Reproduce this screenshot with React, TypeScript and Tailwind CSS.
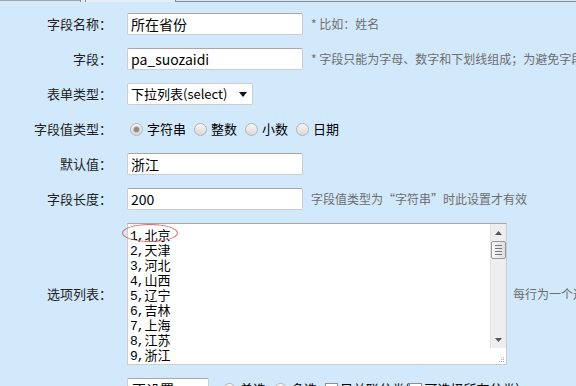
import React from 'react';

// Form for editing a custom field (字段设置)
const cjk = "font-['Noto_Sans_CJK_SC','Microsoft_YaHei',sans-serif]";
const hint = "font-['Noto_Sans_CJK_SC',sans-serif] text-[12px] text-[#6e6e6e]";

const provinces = ['北京', '天津', '河北', '山西', '辽宁', '吉林', '上海', '江苏', '浙江', '安徽'];

const Radio = ({ checked = false }: { checked?: boolean }) => (
  <span className="flex h-[13px] w-[13px] shrink-0 items-center justify-center rounded-full border border-[#b4b4b4] bg-gradient-to-b from-[#f7f7f7] to-[#d8d8d8]">
    {checked && <span className="h-[5px] w-[5px] rounded-full bg-[#8a8a8a] ring-1 ring-[#c4c4c4]" />}
  </span>
);

const Checkbox = () => (
  <span className="flex h-[13px] w-[13px] shrink-0 items-center justify-center border border-[#8e8e8e] bg-white">
    <span className="h-[7px] w-[7px] bg-gradient-to-br from-[#d8dfe8] to-[#9fb0c4]" />
  </span>
);

const Arrow = () => (
  <svg width="8" height="5" viewBox="0 0 8 5">
    <path d="M0 0h8L4 5z" fill="#111" />
  </svg>
);

const Label = ({ children }: { children: React.ReactNode }) => (
  <div className={`w-[112px] shrink-0 text-right text-[13px] text-[#222] ${cjk}`}>{children}</div>
);

const TextInput = ({ value }: { value: string }) => (
  <div className={`ml-[15px] flex h-[22px] w-[176px] shrink-0 items-center rounded-[2px] border border-[#cdcdcd] border-t-[#a8a8a8] bg-white px-[3px] text-[14px] text-black ${cjk}`}>
    {value}
  </div>
);

const Row = ({ children, className = '' }: { children: React.ReactNode; className?: string }) => (
  <div className={`flex items-center overflow-hidden ${className}`}>{children}</div>
);

export default function App() {
  return (
    <div className="h-[386px] w-[576px] overflow-hidden bg-[#d2e8fb]">
      {/* tab strip edge */}
      <div className="flex h-[2px]">
        <div className="w-[80px] border-t border-[#a4a4a4]" />
        <div className="w-[1px] bg-[#8c8c8c]" />
        <div className="w-[4px] bg-[#e4eef8]" />
        <div className="w-[1px] bg-[#8c8c8c]" />
        <div className="w-[89px] bg-[#e4eef8]" />
        <div className="w-[1px] bg-[#8c8c8c]" />
        <div className="flex-1 border-b border-[#8c8c8c]" />
      </div>

      <div className="flex flex-col gap-[13px] pt-[11px]">
        <Row>
          <Label>字段名称：</Label>
          <TextInput value="所在省份" />
          <span className={`ml-[8px] whitespace-nowrap ${hint}`}>* 比如：姓名</span>
        </Row>

        <Row>
          <Label>字段：</Label>
          <TextInput value="pa_suozaidi" />
          <span className={`ml-[8px] whitespace-nowrap ${hint}`}>* 字段只能为字母、数字和下划线组成；为避免字段名重复</span>
        </Row>

        <Row>
          <Label>表单类型：</Label>
          <div className={`ml-[15px] flex h-[22px] w-[126px] shrink-0 items-center justify-between rounded-[2px] border border-[#cdcdcd] bg-white pl-[3px] pr-[5px] text-[13px] text-black ${cjk}`}>
            <span>下拉列表(select)</span>
            <Arrow />
          </div>
        </Row>

        <Row className="h-[22px]">
          <Label>字段值类型：</Label>
          <div className={`ml-[18px] flex items-center text-[13px] text-black ${cjk}`}>
            <Radio checked />
            <span className="ml-[4px] mr-[8px]">字符串</span>
            <Radio />
            <span className="ml-[4px] mr-[8px]">整数</span>
            <Radio />
            <span className="ml-[4px] mr-[8px]">小数</span>
            <Radio />
            <span className="ml-[4px]">日期</span>
          </div>
        </Row>

        <Row>
          <Label>默认值：</Label>
          <TextInput value="浙江" />
        </Row>

        <Row>
          <Label>字段长度：</Label>
          <TextInput value="200" />
          <span className={`ml-[8px] whitespace-nowrap ${hint}`}>字段值类型为“字符串”时此设置才有效</span>
        </Row>

        <Row className="overflow-visible">
          <Label>选项列表：</Label>
          <div className="relative ml-[15px] flex h-[142px] w-[380px] shrink-0 border border-[#cdcdcd] border-t-[#a8a8a8] bg-white">
            <div className="flex-1 overflow-hidden pl-[2px] pt-[3px] text-[13px] leading-[15px]">
              {provinces.map((p, i) => (
                <div key={i} className="h-[15px] whitespace-nowrap text-black">
                  <span className="font-['Liberation_Mono',monospace] tracking-[-1.1px]">{`${i + 1},`}</span>
                  <span className="ml-[1px] font-['Noto_Sans_CJK_SC',sans-serif]">{p}</span>
                </div>
              ))}
            </div>
            {/* scrollbar */}
            <div className="flex w-[16px] flex-col">
              <div className="flex flex-1 flex-col items-center border-l border-[#e2e2e2] bg-[#eeeeee]">
                <div className="flex h-[17px] items-center">
                  <svg width="7" height="4" viewBox="0 0 7 4"><path d="M0 4h7L3.5 0z" fill="#555" /></svg>
                </div>
                <div className="flex h-[18px] w-[15px] flex-col items-center justify-center gap-[2px] rounded-[2px] border border-[#999] bg-gradient-to-r from-[#f8f8f8] to-[#dedede]">
                  <span className="h-[1px] w-[7px] bg-[#777]" />
                  <span className="h-[1px] w-[7px] bg-[#777]" />
                  <span className="h-[1px] w-[7px] bg-[#777]" />
                  <span className="h-[1px] w-[7px] bg-[#777]" />
                </div>
                <div className="flex-1" />
                <div className="flex h-[17px] items-center">
                  <svg width="7" height="4" viewBox="0 0 7 4"><path d="M0 0h7L3.5 4z" fill="#555" /></svg>
                </div>
              </div>
              <div className="flex h-[16px] items-end justify-end bg-white pb-[1px] pr-[1px]">
                <svg width="7" height="7" viewBox="0 0 7 7">
                  <rect x="5" y="1" width="1" height="1" fill="#aaa" />
                  <rect x="3" y="3" width="1" height="1" fill="#aaa" />
                  <rect x="5" y="3" width="1" height="1" fill="#aaa" />
                  <rect x="1" y="5" width="1" height="1" fill="#aaa" />
                  <rect x="3" y="5" width="1" height="1" fill="#aaa" />
                  <rect x="5" y="5" width="1" height="1" fill="#aaa" />
                </svg>
              </div>
            </div>
            {/* highlight ring around first entry */}
            <div className="absolute left-[-6px] top-[0px] h-[18px] w-[56px] rounded-[50%] border border-[#e06464]" />
          </div>
          <span className={`ml-[6px] whitespace-nowrap ${hint}`}>每行为一个选项</span>
        </Row>

        <Row className="overflow-visible">
          <div className="w-[112px] shrink-0" />
          <div className={`ml-[15px] flex h-[22px] w-[82px] shrink-0 items-center rounded-[2px] border border-[#cdcdcd] border-t-[#a8a8a8] bg-white px-[4px] text-[14px] ${cjk}`}>
            不设置
          </div>
          <div className={`ml-[14px] flex shrink-0 items-center whitespace-nowrap text-[13px] text-black ${cjk}`}>
            <Radio />
            <span className="ml-[4px] mr-[8px]">单选</span>
            <Radio />
            <span className="ml-[4px] mr-[8px]">多选</span>
            <Checkbox />
            <span className="ml-[2px]">只关联分类(</span>
            <Checkbox />
            <span className="ml-[2px]">可选择所有分类)</span>
          </div>
        </Row>
      </div>
    </div>
  );
}
